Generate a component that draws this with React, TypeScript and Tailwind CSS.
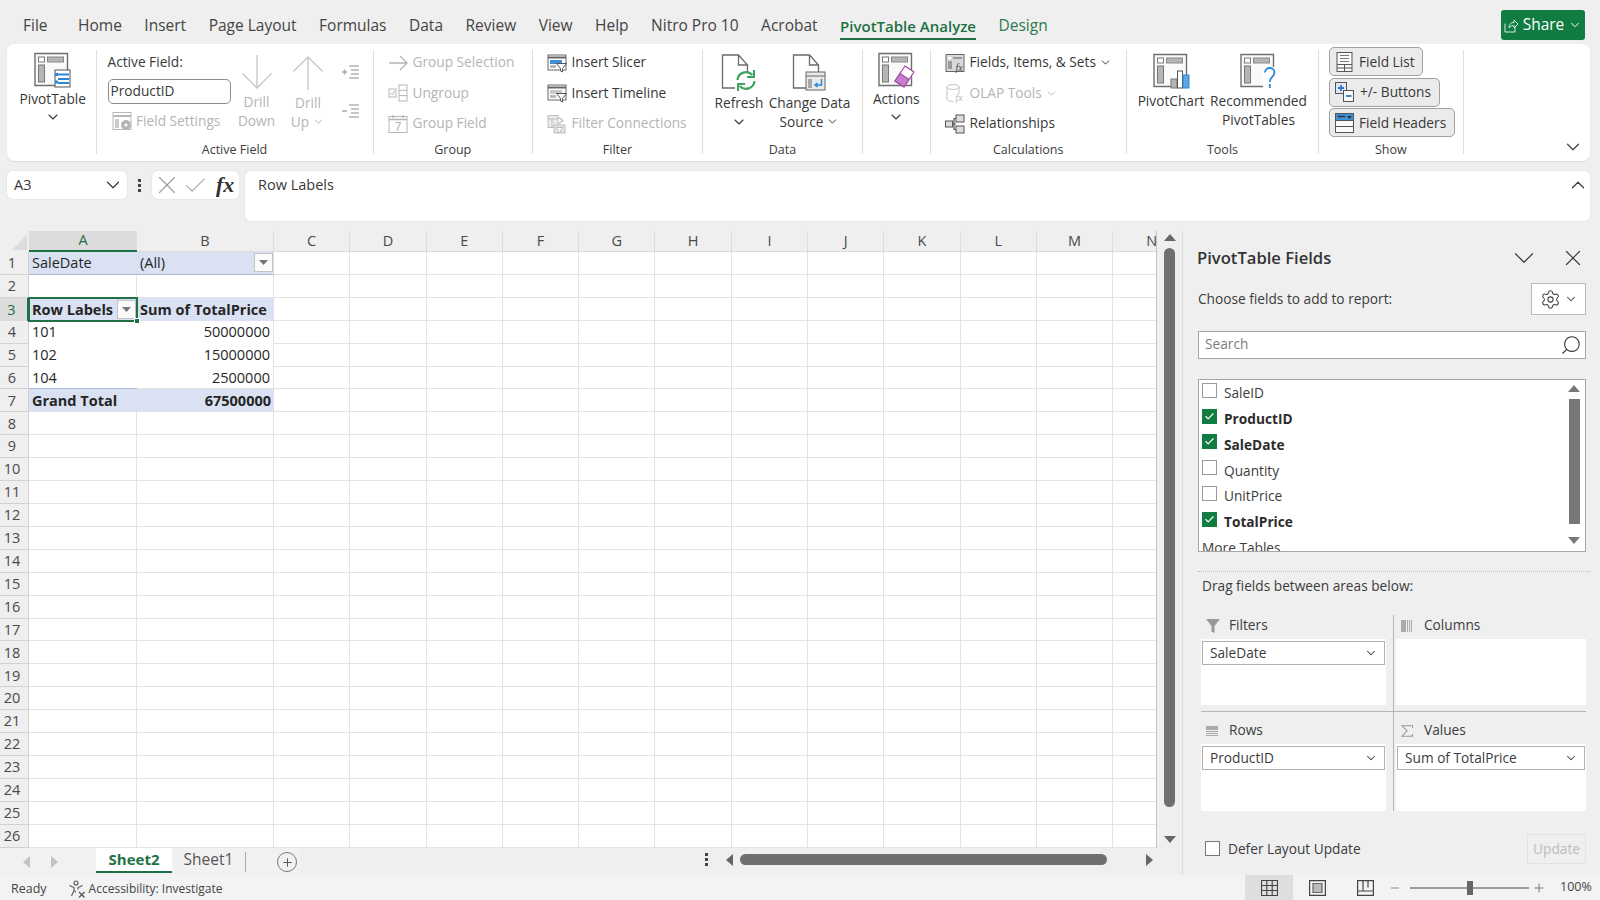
import type { ReactNode } from "react"
import { ChevronDown, ChevronUp, Check, X, Plus, Minus, Search, Settings } from "lucide-react"

const tabs = ["Home", "Insert", "Page Layout", "Formulas", "Data", "Review", "View", "Help", "Nitro Pro 10", "Acrobat"]
const columns = ["A", "B", "C", "D", "E", "F", "G", "H", "I", "J", "K", "L", "M", "N"]
const rows = Array.from({ length: 26 }, (_, i) => i + 1)

const fields = [
  { name: "SaleID", on: false },
  { name: "ProductID", on: true },
  { name: "SaleDate", on: true },
  { name: "Quantity", on: false },
  { name: "UnitPrice", on: false },
  { name: "TotalPrice", on: true },
]

function Frame({ children }: { children?: ReactNode }) {
  return (
    <svg width="37" height="36" viewBox="0 0 37 36" fill="none">
      <path d="M1 1.5h32.5v32H1z" fill="#fafafa" stroke="#6f6f6f" strokeWidth="1.4" />
      <rect x="4.5" y="5" width="6" height="5" fill="#fff" stroke="#777" />
      <rect x="13.5" y="5" width="16" height="5" fill="#b5b5b5" stroke="#888" />
      <rect x="4.5" y="13" width="6" height="17" fill="#b5b5b5" stroke="#777" />
      {children}
    </svg>
  )
}

function PivotTableIcon() {
  return (
    <Frame>
      <rect x="21" y="18" width="15" height="17" fill="#fff" stroke="#555" />
      <path d="M24 22.5h11M24 27h11M24 31h11" stroke="#2b88d8" strokeWidth="2" />
      <path d="M21 22.5h3M21 30h3" stroke="#2b88d8" strokeWidth="3" />
    </Frame>
  )
}

function ActionsIcon() {
  return (
    <Frame>
      <path d="M27 14l9 6-10 15-9-6z" fill="#fff" stroke="#a44aa8" strokeWidth="1.2" />
      <path d="M22 21.5l9 6-5 7.5-9-6z" fill="#c77fcb" stroke="#a44aa8" strokeWidth="1.2" />
    </Frame>
  )
}

function PivotChartIcon() {
  return (
    <Frame>
      <rect x="18" y="26" width="6" height="9" fill="#b5b5b5" stroke="#777" />
      <rect x="24.5" y="18" width="5" height="17" fill="#fff" stroke="#555" />
      <rect x="30" y="22" width="6" height="13" fill="#5aa5e2" stroke="#2b88d8" />
    </Frame>
  )
}

function RecommendedIcon() {
  return (
    <Frame>
      <rect x="23" y="14" width="14" height="22" fill="#fff" />
      <path d="M25 19.5c0-6 9.5-6 9.5 0 0 4.5-4.7 4.500-4.700 9.500M29.800 31v4" stroke="#2b88d8" strokeWidth="1.800" />
    </Frame>
  )
}

function DocBase({ children }: { children?: ReactNode }) {
  return (
    <svg width="36" height="37" viewBox="0 0 36 37" fill="none">
      <path d="M1.500 1h16l9 10v23h-25z" fill="#fff" stroke="#6a6a6a" strokeWidth="1.300" />
      <path d="M17.500 1v10h9" stroke="#6a6a6a" strokeWidth="1.300" />
      {children}
    </svg>
  )
}

function RefreshIcon() {
  return (
    <DocBase>
      <rect x="14" y="18" width="22" height="19" fill="#fff" />
      <path d="M16.500 26a8.500 8.500 0 0 1 14.800-5M33.500 27a8.500 8.500 0 0 1-14.800 5" stroke="#3fa35f" strokeWidth="2.200" />
      <path d="M33 16v7h-7M17 37v-7h7" stroke="#3fa35f" strokeWidth="2" />
    </DocBase>
  )
}

function ChangeSourceIcon() {
  return (
    <DocBase>
      <rect x="14" y="18" width="19" height="18" fill="#e9e9e9" stroke="#666" />
      <path d="M14 22h19" stroke="#666" />
      <rect x="16" y="25" width="4" height="9" fill="#a8a8a8" />
      <path d="M29.500 25v6h-6M25.500 29l-2.500 2 2.500 2" stroke="#2b88d8" strokeWidth="1.500" />
    </DocBase>
  )
}

function DrillIcon({ up }: { up?: boolean }) {
  return (
    <svg width="32" height="36" viewBox="0 0 32 36" fill="none" className={up ? "rotate-180" : ""} stroke="#c8c8c8" strokeWidth="1.400">
      <path d="M16 1v33M1.500 19.500L16 34l14.500-14.500" />
    </svg>
  )
}

function IndentIcon({ minus }: { minus?: boolean }) {
  return (
    <svg width="18" height="16" viewBox="0 0 18 16" fill="none" stroke="#b3b3b3" strokeWidth="1.300">
      <path d="M8 2h10M10 6h8M10 10h8M8 14h10" />
      <path d={minus ? "M1 8h5" : "M1 8h5M3.500 5.500v5"} strokeWidth="1.500" stroke="#aaa" />
    </svg>
  )
}

function SmallTable({ children, gray }: { children?: ReactNode; gray?: boolean }) {
  const c = gray ? "#b8b8b8" : "#666"
  return (
    <svg width="20" height="20" viewBox="0 0 20 20" fill="none">
      <rect x="1" y="1.500" width="18" height="17" fill="#fff" stroke={c} />
      <path d="M1 5h18" stroke={c} strokeWidth="2" />
      <rect x="3" y="8" width="4" height="9" fill={gray ? "#ccc" : "#b0b0b0"} />
      {children}
    </svg>
  )
}

function FieldSettingsIcon() {
  return (
    <SmallTable gray>
      <circle cx="14" cy="14" r="5" fill="#b5b5b5" />
      <circle cx="14" cy="14" r="1.600" fill="#fff" />
    </SmallTable>
  )
}

function UngroupIcon() {
  return (
    <svg width="20" height="20" viewBox="0 0 20 20" fill="none" stroke="#b5b5b5">
      <rect x="1" y="6" width="7" height="8" />
      <path d="M2.500 10l2 2 2-4" />
      <rect x="11" y="2" width="8" height="16" />
      <path d="M11 7.300h8M11 12.600h8" />
    </svg>
  )
}

function GroupFieldIcon() {
  return (
    <svg width="20" height="20" viewBox="0 0 20 20" fill="none" stroke="#b5b5b5">
      <rect x="1" y="2.500" width="18" height="16" />
      <path d="M1 5.500h18M5 1v3M15 1v3" strokeWidth="1.400" />
      <text x="10" y="17" textAnchor="middle" fontSize="12" fill="#b0b0b0" stroke="none" fontFamily="Liberation Sans">7</text>
    </svg>
  )
}

function SlicerIcon({ timeline }: { timeline?: boolean }) {
  return (
    <svg width="20" height="20" viewBox="0 0 20 20" fill="none">
      <rect x="1" y="2" width="18" height="15" fill="#fff" stroke="#666" />
      <path d="M1 4.500h18" stroke="#666" strokeWidth="2" />
      <rect x="3" y="7" width="12" height="4" fill={timeline ? "#c7c7c7" : "#3f8fd6"} />
      <rect x="3" y="12" width="6" height="3" fill="#b8b8b8" />
      <path d="M9.500 10.500h10l-4 5v3.500l-2-1v-2.500z" fill="#fff" stroke="#555" />
    </svg>
  )
}

function FilterConnIcon() {
  return (
    <svg width="20" height="20" viewBox="0 0 20 20" fill="none" stroke="#bdbdbd">
      <rect x="1" y="1.500" width="10" height="12" fill="#ececec" />
      <path d="M1 5h10M5 5v8" />
      <path d="M12 3.500l4 3-4 3" strokeWidth="1.300" />
      <rect x="7" y="11" width="11" height="8" fill="#e4e4e4" />
      <path d="M9 13.500h7l-2.500 3v2h-2v-2z" fill="#fff" />
    </svg>
  )
}

function FieldsItemsIcon() {
  return (
    <svg width="20" height="20" viewBox="0 0 20 20" fill="none">
      <rect x="1" y="1.500" width="18" height="17" fill="#d9d9d9" stroke="#666" />
      <rect x="3" y="4" width="3" height="2" fill="#fff" />
      <rect x="8" y="4" width="9" height="2" fill="#9a9a9a" />
      <rect x="3" y="8" width="4" height="8" fill="#9a9a9a" />
      <text x="14" y="18" textAnchor="middle" fontSize="10" fontStyle="italic" fontFamily="Liberation Serif" fill="#444">fx</text>
    </svg>
  )
}

function OlapIcon() {
  return (
    <svg width="20" height="20" viewBox="0 0 20 20" fill="none" stroke="#c2c2c2">
      <ellipse cx="8" cy="4" rx="6" ry="2.500" />
      <path d="M2 4v12c0 1.500 3 2.500 6 2.500M14 4v6" />
      <text x="14" y="18" textAnchor="middle" fontSize="10" fontStyle="italic" fontFamily="Liberation Serif" fill="#b8b8b8" stroke="none">fx</text>
    </svg>
  )
}

function RelationshipsIcon() {
  return (
    <svg width="20" height="20" viewBox="0 0 20 20" fill="none" stroke="#555">
      <rect x="0.500" y="7" width="7" height="6" fill="#ddd" />
      <rect x="11" y="1" width="8" height="7" fill="#ddd" />
      <rect x="11" y="12" width="8" height="7" fill="#ddd" />
      <path d="M7.500 10h3.500M9 10V4.500h2M9 10v5.500h2" strokeWidth="1.200" />
    </svg>
  )
}

function FieldListIcon() {
  return (
    <svg width="17" height="20" viewBox="0 0 17 20" fill="none" stroke="#555">
      <rect x="1" y="0.500" width="15" height="19" fill="#fafafa" />
      <path d="M4 3.500h9M4 6.500h9M4 9.500h9" stroke="#777" />
      <path d="M1 12.500h15M8.500 12.500v7M1 16h15" />
    </svg>
  )
}

function PlusMinusIcon() {
  return (
    <svg width="19" height="20" viewBox="0 0 19 20" fill="none">
      <rect x="0.500" y="0.500" width="11" height="11" fill="#dbe8f6" stroke="#555" />
      <path d="M3 6h6M6 3v6" stroke="#2b78c8" strokeWidth="1.800" />
      <rect x="8.500" y="8.500" width="10" height="11" fill="#fafafa" stroke="#555" />
      <path d="M11 14h5.500" stroke="#2b78c8" strokeWidth="1.800" />
    </svg>
  )
}

function FieldHeadersIcon() {
  return (
    <svg width="19" height="20" viewBox="0 0 19 20" fill="none">
      <rect x="0.500" y="0.500" width="18" height="19" fill="#fafafa" stroke="#555" />
      <rect x="1" y="1" width="17" height="6.500" fill="#3f8fd6" />
      <path d="M3 3.500h7" stroke="#333" strokeWidth="1.500" />
      <path d="M12 3h5l-2.500 3z" fill="#333" />
      <path d="M1 7.500h17M1 13.500h17" stroke="#555" />
    </svg>
  )
}

function Triangle({ dir, className }: { dir: "up" | "down" | "left" | "right"; className?: string }) {
  const d = { up: "M0 9L6 2l6 7z", down: "M0 3h12l-6 7z", left: "M9 0v12L2 6z", right: "M3 0v12l7-6z" }[dir]
  return (
    <svg width="12" height="12" viewBox="0 0 12 12" className={className}>
      <path d={d} fill="currentColor" />
    </svg>
  )
}

function CellDropdown() {
  return (
    <div className="-mt-[1px] flex h-[19px] w-[19px] shrink-0 items-center justify-center border border-[#c4c4c4] bg-[#fbfbfb]">
      <svg width="9" height="5" viewBox="0 0 9 5">
        <path d="M0 0h9L4.500 5z" fill="#777" />
      </svg>
    </div>
  )
}

function Group({ label, className, children }: { label?: string; className: string; children: ReactNode }) {
  return (
    <div className={`flex h-[104px] shrink-0 flex-col border-r border-[#dedede] ${className}`}>
      <div className="flex h-[92px] shrink-0 items-start">{children}</div>
      {label && <div className="h-[16px] shrink-0 text-center text-[12.500px] leading-[16px] text-[#3c3c3c]">{label}</div>}
    </div>
  )
}

function SmallRow({ icon, text, dim, chevron }: { icon: ReactNode; text: string; dim?: boolean; chevron?: boolean }) {
  return (
    <div className={`flex h-[30.500px] items-center gap-[4.500px] whitespace-nowrap text-[13.700px] ${dim ? "text-[#b4b4b4]" : "text-[#383838]"}`}>
      {icon}
      <span>{text}</span>
      {chevron && <ChevronDown size={13} strokeWidth={1.800} className="-ml-[1px]" />}
    </div>
  )
}

function LargeButton({
  icon,
  lines,
  chevron,
  dim,
  className,
  iconClass,
  chevronClass,
}: {
  icon: ReactNode
  lines: string[]
  chevron?: "inline" | "below"
  dim?: boolean
  className: string
  iconClass: string
  chevronClass?: string
}) {
  return (
    <div className={`flex shrink-0 flex-col items-center whitespace-nowrap text-[13.700px] leading-[19px] ${dim ? "text-[#b4b4b4]" : "text-[#383838]"} ${className}`}>
      <div className={`flex h-[36px] items-start justify-center ${iconClass}`}>{icon}</div>
      {lines.map((line, i) => (
        <div key={line} className="flex items-center gap-[3px]">
          {line}
          {chevron === "inline" && i === lines.length - 1 && <ChevronDown size={13} strokeWidth={1.800} />}
        </div>
      ))}
      {chevron === "below" && (
        <div className={`flex items-center ${chevronClass ?? "h-[19px]"}`}>
          <ChevronDown size={16} strokeWidth={1.600} />
        </div>
      )}
    </div>
  )
}

function ShowButton({ icon, text, className }: { icon: ReactNode; text: string; className: string }) {
  return (
    <div className={`flex h-[29px] items-center rounded-[5px] border border-[#a0a0a0] bg-[#ebebeb] text-[13.700px] text-[#383838] ${className}`}>
      {icon}
      <span className="whitespace-nowrap pt-[1px]">{text}</span>
    </div>
  )
}

function Ribbon() {
  return (
    <div className="mx-[7px] flex h-[117px] w-[1583px] rounded-[8px] bg-white pt-[6px] shadow-[0_1px_1px_rgba(0,0,0,0.08)]">
      <Group className="w-[89.500px]" label=" ">
        <LargeButton className="w-full pl-[3px] pt-[2px]" iconClass="mb-[1px]" chevronClass="h-[17px]" icon={<PivotTableIcon />} lines={["PivotTable"]} chevron="below" />
      </Group>

      <Group className="w-[277px]" label="Active Field">
        <div className="ml-[11px] flex w-[123px] shrink-0 flex-col text-[13.700px] text-[#383838]">
          <div className="mt-[1px] flex h-[22px] items-center leading-none">Active Field:</div>
          <div className="mt-[6px] flex h-[25px] items-center rounded-[5px] border border-[#8c8c8c] pl-[2px]">ProductID</div>
          <div className="mt-[7px] flex items-center gap-[4.500px] pl-[4px] text-[#b4b4b4]">
            <FieldSettingsIcon />
            Field Settings
          </div>
        </div>
        <LargeButton className="w-[52px] pt-[4px]" iconClass="mb-[2px]" icon={<DrillIcon />} lines={["Drill", "Down"]} dim />
        <LargeButton className="w-[51px] pt-[5px]" iconClass="mb-[2px]" icon={<DrillIcon up />} lines={["Drill", "Up"]} chevron="inline" dim />
        <div className="ml-[7px] flex flex-col gap-[23px] pt-[14px]">
          <IndentIcon />
          <IndentIcon minus />
        </div>
      </Group>

      <Group className="w-[159.500px]" label="Group">
        <div className="-mt-[2.500px] pl-[14.500px]">
          <SmallRow dim text="Group Selection" icon={<svg width="20" height="20" viewBox="0 0 20 20" fill="none" stroke="#b5b5b5" strokeWidth="1.300"><path d="M1 10h18M12 3l7 7-7 7" /></svg>} />
          <SmallRow dim text="Ungroup" icon={<UngroupIcon />} />
          <SmallRow dim text="Group Field" icon={<GroupFieldIcon />} />
        </div>
      </Group>

      <Group className="w-[170px]" label="Filter">
        <div className="-mt-[2.500px] pl-[14px]">
          <SmallRow text="Insert Slicer" icon={<SlicerIcon />} />
          <SmallRow text="Insert Timeline" icon={<SlicerIcon timeline />} />
          <SmallRow dim text="Filter Connections" icon={<FilterConnIcon />} />
        </div>
      </Group>

      <Group className="w-[160px]" label="Data">
        <LargeButton className="ml-[9px] w-[54px] pt-[4px]" iconClass="mb-[3px]" icon={<RefreshIcon />} lines={["Refresh"]} chevron="below" />
        <LargeButton className="w-[87px] pt-[4px]" iconClass="mb-[3px]" icon={<ChangeSourceIcon />} lines={["Change Data", "Source"]} chevron="inline" />
      </Group>

      <Group className="w-[67.500px]" label=" ">
        <LargeButton className="w-full pt-[2px]" iconClass="mb-[1px]" chevronClass="h-[17px]" icon={<ActionsIcon />} lines={["Actions"]} chevron="below" />
      </Group>

      <Group className="w-[196.500px]" label="Calculations">
        <div className="-mt-[2.500px] pl-[14.500px]">
          <SmallRow text="Fields, Items, & Sets" icon={<FieldsItemsIcon />} chevron />
          <SmallRow dim text="OLAP Tools" icon={<OlapIcon />} chevron />
          <SmallRow text="Relationships" icon={<RelationshipsIcon />} />
        </div>
      </Group>

      <Group className="w-[192px]" label="Tools">
        <LargeButton className="ml-[8px] w-[72px] pt-[3px]" iconClass="mb-[2px]" icon={<PivotChartIcon />} lines={["PivotChart"]} />
        <LargeButton className="w-[103px] pt-[3px]" iconClass="mb-[2px]" icon={<RecommendedIcon />} lines={["Recommended", "PivotTables"]} />
      </Group>

      <Group className="w-[144.500px]" label="Show">
        <div className="-mt-[3px] flex flex-col items-start gap-[1.500px] pl-[10px]">
          <ShowButton className="w-[94px] gap-[6px] pl-[6px]" icon={<FieldListIcon />} text="Field List" />
          <ShowButton className="w-[111px] gap-[6px] pl-[5px]" icon={<PlusMinusIcon />} text="+/- Buttons" />
          <ShowButton className="w-[126px] gap-[5px] pl-[5px]" icon={<FieldHeadersIcon />} text="Field Headers" />
        </div>
      </Group>

      <div className="flex flex-1 items-end justify-end pb-[3px] pr-[6px]">
        <ChevronDown size={22} strokeWidth={1.300} className="text-[#444]" />
      </div>
    </div>
  )
}

function FormulaBar() {
  return (
    <div className="mx-[7px] mt-[10px] flex h-[50px] w-[1583px] items-start text-[14.500px] text-[#383838]">
      <div className="flex h-[28px] w-[120px] items-center justify-between rounded-[5px] bg-white pl-[7px] pr-[3px] shadow-[0_0_1px_rgba(0,0,0,0.25)]">
        A3
        <ChevronDown size={22} strokeWidth={1.300} />
      </div>
      <div className="flex h-[28px] w-[25px] flex-col items-center justify-center gap-[2px]">
        <span className="h-[3px] w-[3px] bg-[#444]" />
        <span className="h-[3px] w-[3px] bg-[#444]" />
        <span className="h-[3px] w-[3px] bg-[#444]" />
      </div>
      <div className="flex h-[28px] w-[87px] items-center rounded-[5px] bg-white shadow-[0_0_1px_rgba(0,0,0,0.25)]">
        <X size={30} strokeWidth={0.900} className="text-[#9a9a9a]" />
        <Check size={27} strokeWidth={0.900} className="text-[#9a9a9a]" />
        <span className="ml-[7px] font-['Liberation_Serif',serif] text-[22px] font-bold italic leading-none text-[#333]">fx</span>
      </div>
      <div className="ml-[6px] flex h-[50px] flex-1 justify-between rounded-[5px] bg-white pl-[13px] pr-[1px] pt-[3px] shadow-[0_0_1px_rgba(0,0,0,0.25)]">
        Row Labels
        <ChevronUp size={22} strokeWidth={1.300} />
      </div>
    </div>
  )
}

function Sheet() {
  return (
    <div className="grid grid-cols-[29px_108px_137px_repeat(11,76.300px)_43.700px] grid-rows-[21px_repeat(26,22.920px)] overflow-hidden border-b border-[#c4c4c4] bg-white text-[14.500px] leading-none text-[#262626]">
      <div className="flex items-end justify-end bg-[#efefef] pb-[2px] pr-[2px]">
        <svg width="15" height="15" viewBox="0 0 15 15">
          <path d="M15 0v15H0z" fill="#dcdcdc" />
        </svg>
      </div>
      {columns.map((c) => (
        <div
          key={c}
          className={
            c === "A"
              ? "flex items-center justify-center border-b-2 border-[#1f7145] bg-[#dcdcdc] text-[#1f7145]"
              : c === "N"
                ? "flex items-center overflow-hidden border-b border-[#dcdcdc] bg-[#efefef] pl-[33px] text-[#4a4a4a]"
                : "flex items-center justify-center border-b border-r border-[#dcdcdc] bg-[#efefef] text-[#4a4a4a]"
          }
        >
          {c}
        </div>
      ))}
      {rows.map((r) => (
        <SheetRow key={r} r={r} />
      ))}
    </div>
  )
}

function SheetRow({ r }: { r: number }) {
  const plain = "border-b border-r border-[#e3e3e3]"
  const blue = "bg-[#d9e1f2] pt-[1px]"
  let a: ReactNode = <div className={plain} />
  let b: ReactNode = <div className={plain} />

  if (r === 1) {
    a = <div className={`${blue} flex items-center border-b border-[#a9bbdf] pl-[3px]`}>SaleDate</div>
    b = (
      <div className={`${blue} flex items-center justify-between border-b border-[#a9bbdf] pl-[3px] pr-px`}>
        (All)
        <CellDropdown />
      </div>
    )
  } else if (r === 3) {
    a = (
      <div className={`${blue} relative flex items-center justify-between pl-[3px] pr-[1px] font-bold`}>
        Row Labels
        <CellDropdown />
        <div className="absolute -inset-[1px] border-2 border-[#1f7145]" />
        <div className="absolute -bottom-[3px] -right-[3px] h-[6px] w-[6px] border border-white bg-[#1f7145]" />
      </div>
    )
    b = <div className={`${blue} flex items-center pl-[3px] font-bold`}>Sum of TotalPrice</div>
  } else if (r >= 4 && r <= 6) {
    const label = { 4: "101", 5: "102", 6: "104" }[r]
    const value = { 4: "50000000", 5: "15000000", 6: "2500000" }[r]
    const last = r === 6 ? "border-b border-[#a9bbdf]" : ""
    a = <div className={`flex items-center pl-[3px] pt-[1px] ${last}`}>{label}</div>
    b = <div className={`flex items-center justify-end border-r border-[#e3e3e3] pr-[3px] pt-[1px] ${last}`}>{value}</div>
  } else if (r === 7) {
    a = <div className={`${blue} flex items-center pl-[3px] font-bold`}>Grand Total</div>
    b = <div className={`${blue} flex items-center justify-end pr-[3px] font-bold`}>67500000</div>
  }

  return (
    <>
      <div
        className={
          r === 3
            ? "flex items-center justify-center border-r-2 border-[#1f7145] bg-[#dcdcdc] pr-[4px] pt-[1px] text-[#1f7145]"
            : "flex items-center justify-center border-b border-r border-[#d2d2d2] bg-[#efefef] pr-[4px] pt-[1px] text-[#4a4a4a]"
        }
      >
        {r}
      </div>
      {a}
      {b}
      {columns.slice(2).map((c) => (
        <div key={c} className={plain} />
      ))}
    </>
  )
}

function SheetTabs() {
  return (
    <div className="flex h-[27px] items-start bg-[#efefef]">
      <div className="flex h-[27px] w-[301px] shrink-0 items-start bg-[#f1f1f1] pl-[13px] text-[#c2c2c2]">
        <div className="flex h-[27px] w-[27px] items-center justify-center"><Triangle dir="left" /></div>
        <div className="flex h-[27px] w-[27px] items-center justify-center"><Triangle dir="right" /></div>
        <div className="ml-[29px] flex h-[25px] w-[76px] items-center justify-center border-b-[2.500px] border-[#1f7145] bg-white text-[15px] font-bold text-[#1f7145]">Sheet2</div>
        <div className="flex h-[23px] w-[73px] items-center justify-center text-[15.500px] text-[#555]">Sheet1</div>
        <div className="mt-[4px] h-[20px] w-px bg-[#aaa]" />
        <div className="ml-[31px] mt-[4px] flex h-[20px] w-[20px] items-center justify-center rounded-full border-[1.500px] border-[#777] text-[#555]">
          <Plus size={13} strokeWidth={1.800} />
        </div>
      </div>
      <div className="ml-[398px] flex h-[23px] w-[14px] flex-col items-center justify-center gap-[2px]">
        <span className="h-[3px] w-[3px] bg-[#444]" />
        <span className="h-[3px] w-[3px] bg-[#444]" />
        <span className="h-[3px] w-[3px] bg-[#444]" />
      </div>
      <div className="ml-[11px] flex h-[23px] items-center text-[#666]">
        <Triangle dir="left" />
        <div className="ml-[4px] h-[11px] w-[367px] rounded-full bg-[#6f6f6f]" />
        <Triangle dir="right" className="ml-[36px]" />
      </div>
    </div>
  )
}

function Panel() {
  return (
    <div className="flex h-[644px] w-[418px] shrink-0 flex-col border-l border-[#dcdcdc] bg-[#efefef] pl-[15px] pr-[14px] text-[13.700px] text-[#3c3c3c]">
      <div className="mt-[15px] flex h-[24px] items-center justify-between">
        <span className="-ml-[1px] text-[16.600px] font-semibold text-[#333]">PivotTable Fields</span>
        <div className="flex items-center gap-[19px] text-[#333]">
          <ChevronDown size={34} strokeWidth={0.800} />
          <X size={26} strokeWidth={1} />
        </div>
      </div>
      <div className="mt-[13px] flex h-[32px] items-center justify-between">
        Choose fields to add to report:
        <div className="flex h-[32px] w-[55px] items-center justify-center gap-[3px] border border-[#b9b9b9] bg-white text-[#444]">
          <Settings size={21} strokeWidth={1.200} />
          <ChevronDown size={14} strokeWidth={1.800} />
        </div>
      </div>
      <div className="mt-[16px] flex h-[28px] items-center justify-between border border-[#a6a6a6] bg-white pl-[6px] pr-[3px] text-[#7c7c7c]">
        <span className="-mt-[2px]">Search</span>
        <Search size={22} strokeWidth={1.200} className="-scale-x-100 text-[#333]" />
      </div>
      <div className="mt-[20px] flex h-[173px] overflow-hidden border border-[#a6a6a6] bg-white">
        <div className="min-w-0 flex-1 pl-[3px] pt-[0.500px]">
          {fields.map((f) => (
            <div key={f.name} className={`flex h-[25.800px] items-center gap-[7px] ${f.on ? "font-bold text-[#2c2c2c]" : ""}`}>
              {f.on ? (
                <div className="-mt-[6px] flex h-[15px] w-[15px] items-center justify-center bg-[#107c41] text-white">
                  <Check size={11} strokeWidth={2.500} />
                </div>
              ) : (
                <div className="-mt-[6px] h-[15px] w-[15px] border border-[#9b9b9b]" />
              )}
              {f.name}
            </div>
          ))}
          <div className="flex h-[25.800px] items-center">More Tables</div>
        </div>
        <div className="mr-[5px] flex w-[12px] shrink-0 flex-col items-center text-[#777]">
          <Triangle dir="up" className="mt-[3px]" />
          <div className="mt-[4px] h-[125px] w-[11px] bg-[#777]" />
          <Triangle dir="down" className="mt-[10px]" />
        </div>
      </div>
      <div className="-mr-[4px] mt-[19px] h-px border-t border-dotted border-[#bdbdbd]" />
      <div className="mt-[4px] flex h-[20px] items-center pl-[4px]">Drag fields between areas below:</div>
      <div className="ml-[3px] mt-[19px] grid grid-cols-[193px_192px] grid-rows-[97px_99px]">
        <div className="border-b border-r border-[#b5b5b5] pr-[7px]">
          <AreaHeader icon={<svg width="14" height="14" viewBox="0 0 14 14"><path d="M0 0h14L8.500 7v7l-3-1.500V7z" fill="#999" /></svg>} text="Filters" />
          <AreaBox item="SaleDate" className="h-[66px]" />
        </div>
        <div className="border-b border-[#b5b5b5] pl-[2px]">
          <AreaHeader icon={<svg width="11" height="12" viewBox="0 0 11 12"><path d="M0 0h5v12H0zM6 0h1v12H6zM8 0h1v12H8zM10 0h1v12h-1z" fill="#aaa" /></svg>} text="Columns" />
          <AreaBox className="h-[66px]" />
        </div>
        <div className="border-r border-[#b5b5b5] pr-[7px] pt-[8px]">
          <AreaHeader icon={<svg width="12" height="10" viewBox="0 0 12 10"><path d="M0 0h12v4H0zM0 5h12v1H0zM0 7h12v1H0zM0 9h12v1H0z" fill="#aaa" /></svg>} text="Rows" />
          <AreaBox item="ProductID" className="h-[67px]" />
        </div>
        <div className="pl-[2px] pt-[8px]">
          <AreaHeader icon={<svg width="12" height="12" viewBox="0 0 12 12" fill="none"><path d="M11.500 3V.800H1l5 5-5 5.400h10.500V9" stroke="#999" strokeWidth="1.100" /></svg>} text="Values" />
          <AreaBox item="Sum of TotalPrice" className="h-[67px]" />
        </div>
      </div>
      <div className="mt-[23px] flex h-[30px] items-center justify-between">
        <div className="flex items-center gap-[8px] pl-[7px]">
          <div className="h-[15px] w-[15px] border border-[#777] bg-white" />
          Defer Layout Update
        </div>
        <div className="flex h-[30px] w-[59px] items-center justify-center border border-[#e2e2e2] text-[#bcbcbc]">Update</div>
      </div>
    </div>
  )
}

function AreaHeader({ icon, text }: { icon: ReactNode; text: string }) {
  return (
    <div className="flex h-[24px] items-center pb-[3px] pl-[5px]">
      <div className="flex w-[23px] justify-start">{icon}</div>
      {text}
    </div>
  )
}

function AreaBox({ item, className }: { item?: string; className: string }) {
  return (
    <div className={`bg-white px-px pt-[2px] ${className}`}>
      {item && (
        <div className="flex h-[24px] items-center justify-between border border-[#b0b0b0] bg-white pl-[7px] pr-[6px]">
          {item}
          <ChevronDown size={14} strokeWidth={1.800} />
        </div>
      )}
    </div>
  )
}

function StatusBar() {
  return (
    <div className="flex h-[25px] items-center bg-[#f3f3f3] pl-[11px] text-[12.500px] text-[#444]">
      <span className="mt-[3px]">Ready</span>
      <svg className="ml-[21px] mt-[3px]" width="18" height="18" viewBox="0 0 18 18" fill="none" stroke="#555" strokeWidth="1.100">
        <circle cx="8" cy="3" r="2" />
        <path d="M1.500 5.500l4.500 2v3l-2.500 5.500M14.500 5.500L10 7.500v2M6.500 11l1.500 1" />
        <path d="M11 12l5.500 5.500M16.500 12L11 17.500" strokeWidth="1.300" />
      </svg>
      <span className="ml-[3px] mt-[3px] text-[12px]">Accessibility: Investigate</span>
      <div className="ml-auto flex h-full items-center pr-[10px]">
        <div className="flex h-full w-[48px] items-center justify-center bg-[#dedede]">
          <svg width="17" height="16" viewBox="0 0 17 16" fill="none" stroke="#444" strokeWidth="1.100">
            <path d="M.5.500h16v15H.5zM.5 5.500h16M.5 10.500h16M5.800.5v15M11.200.5v15" />
          </svg>
        </div>
        <div className="flex h-full w-[48px] items-center justify-center">
          <svg width="17" height="16" viewBox="0 0 17 16" fill="none" stroke="#444" strokeWidth="1.200">
            <path d="M.6.600h15.800v14.800H.6z" />
            <path d="M4 3.500h9v9H4z" fill="#bbb" stroke="#666" />
          </svg>
        </div>
        <div className="flex h-full w-[48px] items-center justify-center">
          <svg width="17" height="16" viewBox="0 0 17 16" fill="none" stroke="#444" strokeWidth="1.200">
            <path d="M.6.600h15.800v14.800H.6zM.6 11h15.800M6 .6V11M11 .6v7" />
          </svg>
        </div>
        <Minus size={12} strokeWidth={1.500} className="text-[#666]" />
        <div className="relative ml-[9px] h-[2px] w-[119px] bg-[#9c9c9c]">
          <div className="absolute -top-[6px] left-[57px] h-[14px] w-[6px] bg-[#666]" />
        </div>
        <Plus size={14} strokeWidth={1.300} className="ml-[3px] text-[#555]" />
        <span className="ml-[14px] w-[30px] text-right">100%</span>
      </div>
    </div>
  )
}

export default function App() {
  return (
    <div className="flex h-[900px] w-[1600px] flex-col overflow-hidden bg-[#efefef] font-['Open_Sans',sans-serif]">
      <div className="flex h-[44px] shrink-0 items-start">
        <div className="flex h-[44px] items-center gap-[22.500px] pl-[23px] pt-[8px] text-[15.500px] text-[#444]">
          <span className="mr-[8px]">File</span>
          {tabs.map((t) => (
            <span key={t}>{t}</span>
          ))}
          <span className="relative text-[15px] font-semibold text-[#1f7145]">
            PivotTable Analyze
            <span className="absolute -bottom-[3px] left-0 h-[2.500px] w-full bg-[#1f7145]" />
          </span>
          <span className="text-[#2b7a50]">Design</span>
        </div>
        <div className="ml-auto mr-[15px] mt-[10px] flex h-[30px] w-[84px] items-center justify-center gap-[4px] rounded-[3px] bg-[#107c41] text-[15.500px] text-white">
          <svg width="15" height="15" viewBox="0 0 15 15" fill="none" stroke="#d8eee0" strokeWidth="1">
            <path d="M1 5.500v8.500h10V9M5 10c0-4 2-5.500 5-5.500V2l4 4-4 4V7.500C8 7.500 6 8 5 10z" />
          </svg>
          Share
          <ChevronDown size={14} strokeWidth={1.700} />
        </div>
      </div>
      <Ribbon />
      <FormulaBar />
      <div className="mt-[10px] flex h-[644px]">
        <div className="flex w-[1182px] shrink-0 flex-col">
          <div className="flex h-[617px]">
            <div className="w-[1157px] border-r border-[#c4c4c4]">
              <Sheet />
            </div>
            <div className="flex flex-1 flex-col items-center text-[#666]">
              <Triangle dir="up" className="mt-[1px]" />
              <div className="mt-[4px] h-[559px] w-[10.500px] rounded-full bg-[#6f6f6f]" />
              <Triangle dir="down" className="mt-[26px]" />
            </div>
          </div>
          <SheetTabs />
        </div>
        <Panel />
      </div>
      <StatusBar />
    </div>
  )
}
